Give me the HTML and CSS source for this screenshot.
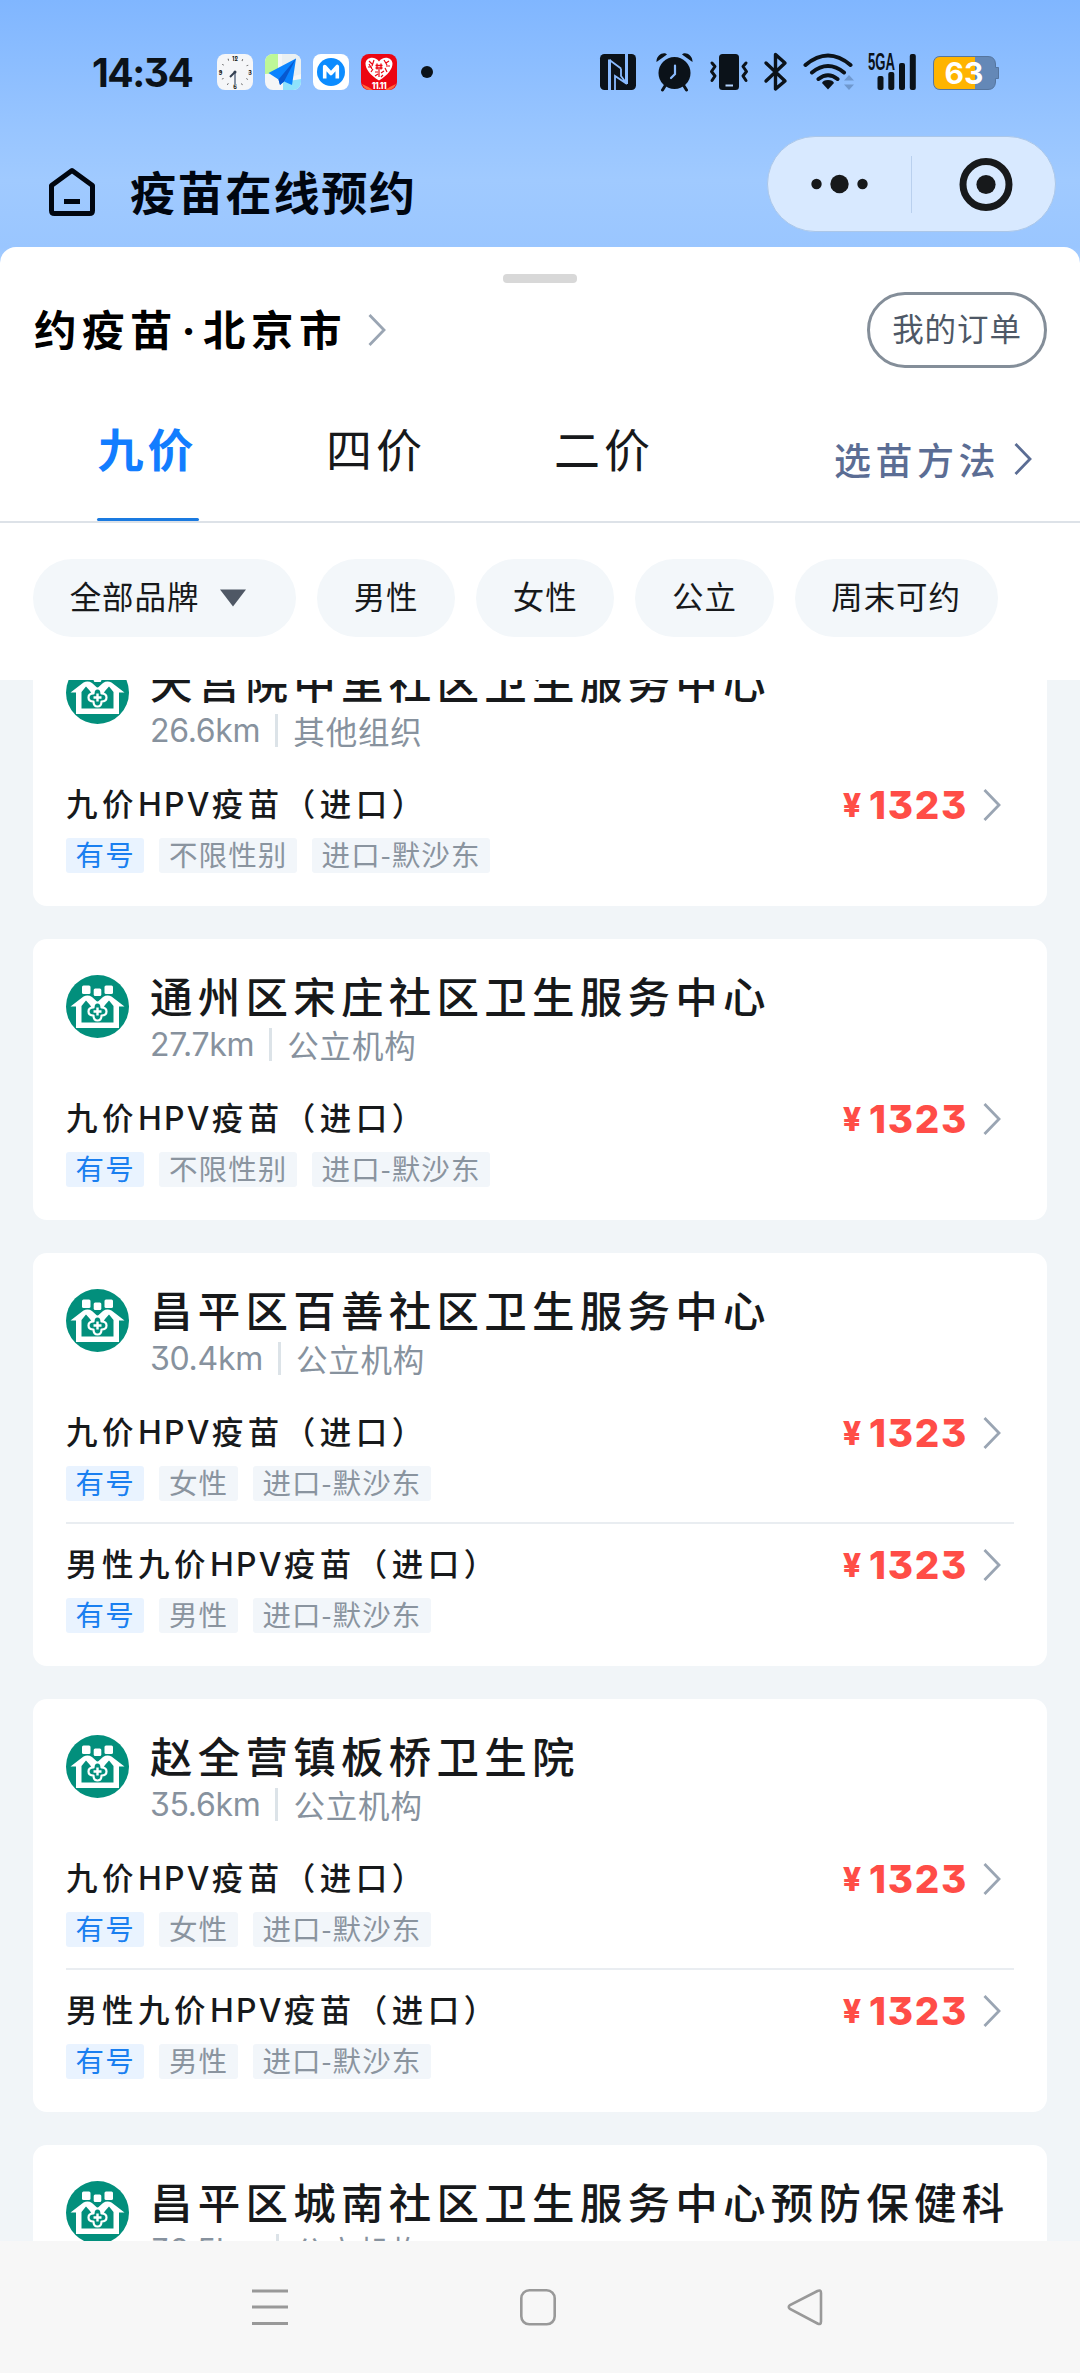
FILE: index.html
```html
<!DOCTYPE html>
<html lang="zh-CN">
<head>
<meta charset="utf-8">
<title>疫苗在线预约</title>
<link rel="stylesheet" href="styles.css">
</head>
<body>
<svg class="defs" width="0" height="0">
  <symbol id="chev" viewBox="0 0 18 32"><path d="M1.500 1 16 16 1.500 31" fill="none" stroke="currentColor" stroke-width="2.800"/></symbol>
  <symbol id="logo" viewBox="0 0 63 63">
    <circle cx="31.500" cy="31.500" r="31.500" fill="#028f7c"/>
    <g fill="#fff">
      <rect x="16" y="10.500" width="8.500" height="8.500" rx="1.500"/><rect x="27.700" y="13.500" width="7.600" height="7.500" rx="1.500"/><rect x="38.500" y="10.500" width="8.500" height="8.500" rx="1.500"/>
      <path d="M4.500 31.500 17.500 21.500Q22 19.500 26 22L31.500 27 37 22Q41 19.500 45.500 21.500L58.500 31.500H53V53H10V31.500Z"/>
    </g>
    <path d="M15.500 31 20 25.500 24 30 31.500 42 39 30 43 25.500 47.500 31V47.500H15.500Z" fill="#028f7c"/>
    <path d="M27.500 32.500Q27.500 27.500 31.500 27.500 35.500 27.500 35.500 32.500 40.500 32.500 40.500 36.500 40.500 40.500 35.500 40.500 35.500 45.500 31.500 45.500 27.500 45.500 27.500 40.500 22.500 40.500 22.500 36.500 22.500 32.500 27.500 32.500Z" fill="#028f7c" stroke="#fff" stroke-width="2.200" stroke-linejoin="round"/>
    <path d="M31.500 32.500v8M27.500 36.500h8" stroke="#fff" stroke-width="2.400"/>
  </symbol>
</svg>

<div class="screen">
  <div class="status">
    <span class="time">14:34</span>
    <div class="apps">
      <svg width="36" height="36" viewBox="0 0 36 36">
        <rect width="36" height="36" rx="8" fill="#f5f6f8"/>
        <circle cx="18" cy="18" r="14" fill="none" stroke="#444" stroke-width="2" stroke-dasharray=".7 6.630" stroke-dashoffset=".35"/>
        <g class="dial"><text x="18" y="6.500">12</text><text x="33" y="20.500">3</text><text x="18" y="34.500">6</text><text x="3.500" y="20.500">9</text></g>
        <path d="M18 18v13" stroke="#8792a3" stroke-width="2"/><path d="M18 18 13 23" stroke="#333f50" stroke-width="2"/><circle cx="18" cy="18" r="1.500" fill="#333f50"/>
      </svg>
      <svg width="36" height="36" viewBox="0 0 36 36">
        <defs><clipPath id="rc"><rect width="36" height="36" rx="8"/></clipPath></defs>
        <g clip-path="url(#rc)"><rect width="36" height="36" fill="#f4f6f7"/><path d="M0 0H13V19L0 20Z" fill="#bdf797"/><path d="M17 0h19v20L17 26Z" fill="#eaf0f2"/><path d="M18 28 36 25V36H18Z" fill="#8fe2fb"/></g>
        <path d="M31 4.500 3.500 19 13.500 25.500 15 31 19 27.500 27 31Z" fill="#0a84ff"/><path d="M31 4.500 13.500 25.500 15 31 19 27.500Z" fill="#0758cf"/>
      </svg>
      <svg width="36" height="36" viewBox="0 0 36 36">
        <rect width="36" height="36" rx="8" fill="#fff"/><circle cx="18" cy="18" r="14" fill="#0c8cff"/>
        <path d="M11.700 24.500V12.500L18 19.500 24.300 12.500V24.500" fill="none" stroke="#fff" stroke-width="3.600" stroke-linejoin="round"/>
      </svg>
      <svg width="36" height="36" viewBox="0 0 36 36">
        <rect width="36" height="36" rx="8" fill="#ec0612"/><path d="M1 30Q8 33 12 36H8Q3 35 1 30ZM35 30Q28 33 24 36H28Q33 35 35 30Z" fill="#ff6a3c"/>
        <path d="M18 26.500C9 21 4.500 15 4.500 9.500 5 3 14 1.500 18 7.500 22 1.500 31 3 31.500 9.500 31.500 15 27 21 18 26.500Z" fill="#fff"/>
        <path d="M8 7l3 3M13 6l-2 6M7 13h4M12 15l-2 3M14 18h3M18 15v8M20 19l3-2M24 14l2 4M25 12h4M23 6l3 5M28 7l-3 2M14 22l3-2M20 23l2-2M8 10l3 5" stroke="#ec0612" stroke-width="1.200"/>
        <path d="M14.500 11.500h7M14.500 14h7M16 9.500v6M20 9.500v6" stroke="#ec0612" stroke-width="1.300"/>
        <text class="sale" x="18" y="34.500">11.11</text>
      </svg>
    </div>
    <i class="dot"></i>
    <svg width="420" height="40" viewBox="599 52 420 40">
      <g fill="#0b1219">
        <rect x="600" y="54" width="36" height="36" rx="4.500"/>
        <circle cx="674.500" cy="73" r="16"/>
        <path d="M656.500 62C656 55 664 51 667 54.500ZM692.500 62C693 55 685 51 682 54.500Z"/>
        <rect x="719" y="54" width="20" height="36" rx="3.500"/>
        <path d="M828 80Q823 80 822 83L828 89.500 834 83Q833 80 828 80Z"/>
        <rect x="877.500" y="76" width="6" height="14" rx="2"/><rect x="888.300" y="72" width="6" height="18" rx="2"/><rect x="899" y="63" width="6" height="27" rx="2"/><rect x="909.800" y="54" width="6" height="36" rx="2"/>
      </g>
      <g fill="none" stroke="#0b1219" stroke-width="3" stroke-linecap="round" stroke-linejoin="round">
        <path d="M665 86 662.500 90M684 86 686.500 90"/>
        <path d="M712 63 715 66.500 711.500 71.500 715 76 712 80.500M746 63 743 66.500 746.500 71.500 743 76 746 80.500"/>
        <path d="M766 63 785 81 775.500 89V54.500L785 63 766 81" stroke-width="3.400"/>
        <path d="M805.500 65Q828 46 850.500 65M812 72.500Q828 59.500 844 72.500M818.500 79Q828 71.500 837.500 79" stroke-width="4"/>
      </g>
      <g fill="none" stroke="#8abbff">
        <path d="M609.500 90V59.500M626.500 54V84" stroke-width="3"/>
        <path d="M609.500 60 621 68.500M627 84 615 76V90M621 68.500V76L627 84" stroke-width="1.800"/>
        <path d="M675 65.500V74L671 78" stroke-linecap="round" stroke-width="2.200"/><path d="M725.500 85.500h7.500" stroke="#b5d4ff" stroke-width="2"/>
      </g>
      <path d="M844 80.500 849 75 854 80.500ZM844 84.500 849 90 854 84.500Z" fill="#6f98ce"/>
      <text class="net" x="868" y="70" textLength="27" lengthAdjust="spacingAndGlyphs">5GA</text>
      <path d="M940 56.500H988Q995 56.500 995.500 64V67.500H998.500V78.500H995.500V82Q995 89.500 988 89.500H940Q933.500 89.500 933.500 82V64Q933.500 56.500 940 56.500Z" fill="#6488b7" stroke="#55759f"/>
      <path d="M975 57H940Q934 57 934 64V82Q934 89 940 89H975Z" fill="#ffb400"/>
      <text class="pct" x="964" y="84">63</text>
    </svg>
  </div>

  <header class="head">
    <svg class="home" width="50" height="50" viewBox="0 0 50 50"><path d="M25 3.500 45.500 18.500V43.500Q45.500 46.500 42.500 46.500H7.500Q4.500 46.500 4.500 43.500V18.500Z" fill="none" stroke="#000610" stroke-width="5" stroke-linejoin="round"/><path d="M17 34.500H33" stroke="#000610" stroke-width="5"/></svg>
    <h1>疫苗在线预约</h1>
    <div class="capsule">
      <svg width="288" height="96" viewBox="0 0 288 96"><g fill="#17191b"><circle cx="48.500" cy="47" r="5.200"/><circle cx="71.500" cy="47" r="9.200"/><circle cx="94.500" cy="47" r="5.200"/><circle cx="218" cy="47.500" r="9.600"/></g><circle cx="218" cy="47.500" r="23" fill="none" stroke="#17191b" stroke-width="7"/><path d="M143.500 19v57" stroke="#b9d0ee"/></svg>
    </div>
  </header>

  <main class="sheet">
    <i class="handle"></i>
    <div class="place">
      <h2>约疫苗<span>·</span>北京市</h2>
      <svg class="chev" width="18" height="32"><use href="#chev"/></svg>
      <a class="orders">我的订单</a>
    </div>
    <nav class="tabs">
      <a class="tab on">九价</a><a class="tab">四价</a><a class="tab">二价</a>
      <a class="how">选苗方法<svg width="18" height="32"><use href="#chev"/></svg></a>
    </nav>
    <div class="chips">
      <a class="chip">全部品牌<svg width="28" height="18" viewBox="0 0 28 18"><path d="M1 .5H27L14 17.500Z" fill="#4f5865"/></svg></a><a class="chip">男性</a><a class="chip">女性</a><a class="chip">公立</a><a class="chip">周末可约</a>
    </div>

    <div class="list">
      <section class="card">
        <div class="org"><svg width="63" height="63"><use href="#logo"/></svg><div><h3>天宫院中里社区卫生服务中心</h3><p><b>26.6km</b><i></i>其他组织</p></div></div>
        <div class="item"><div><h4>九价<b>HPV</b>疫苗（进口）</h4><div class="tags"><em>有号</em><span>不限性别</span><span>进口-默沙东</span></div></div><div class="price"><small>¥</small>1323<svg width="18" height="32"><use href="#chev"/></svg></div></div>
      </section>
      <section class="card">
        <div class="org"><svg width="63" height="63"><use href="#logo"/></svg><div><h3>通州区宋庄社区卫生服务中心</h3><p><b>27.7km</b><i></i>公立机构</p></div></div>
        <div class="item"><div><h4>九价<b>HPV</b>疫苗（进口）</h4><div class="tags"><em>有号</em><span>不限性别</span><span>进口-默沙东</span></div></div><div class="price"><small>¥</small>1323<svg width="18" height="32"><use href="#chev"/></svg></div></div>
      </section>
      <section class="card">
        <div class="org"><svg width="63" height="63"><use href="#logo"/></svg><div><h3>昌平区百善社区卫生服务中心</h3><p><b>30.4km</b><i></i>公立机构</p></div></div>
        <div class="item"><div><h4>九价<b>HPV</b>疫苗（进口）</h4><div class="tags"><em>有号</em><span>女性</span><span>进口-默沙东</span></div></div><div class="price"><small>¥</small>1323<svg width="18" height="32"><use href="#chev"/></svg></div></div>
        <div class="item"><div><h4>男性九价<b>HPV</b>疫苗（进口）</h4><div class="tags"><em>有号</em><span>男性</span><span>进口-默沙东</span></div></div><div class="price"><small>¥</small>1323<svg width="18" height="32"><use href="#chev"/></svg></div></div>
      </section>
      <section class="card">
        <div class="org"><svg width="63" height="63"><use href="#logo"/></svg><div><h3>赵全营镇板桥卫生院</h3><p><b>35.6km</b><i></i>公立机构</p></div></div>
        <div class="item"><div><h4>九价<b>HPV</b>疫苗（进口）</h4><div class="tags"><em>有号</em><span>女性</span><span>进口-默沙东</span></div></div><div class="price"><small>¥</small>1323<svg width="18" height="32"><use href="#chev"/></svg></div></div>
        <div class="item"><div><h4>男性九价<b>HPV</b>疫苗（进口）</h4><div class="tags"><em>有号</em><span>男性</span><span>进口-默沙东</span></div></div><div class="price"><small>¥</small>1323<svg width="18" height="32"><use href="#chev"/></svg></div></div>
      </section>
      <section class="card">
        <div class="org"><svg width="63" height="63"><use href="#logo"/></svg><div><h3>昌平区城南社区卫生服务中心预防保健科</h3><p><b>38.5km</b><i></i>公立机构</p></div></div>
      </section>
    </div>
  </main>

  <footer class="navbar">
    <svg width="40" height="40" viewBox="0 0 40 40"><path d="M2 4H38M2 20H38M2 36.500H38" stroke="#999" stroke-width="3"/></svg>
    <svg width="40" height="40" viewBox="0 0 40 40"><rect x="3.300" y="3.300" width="33.400" height="34" rx="8" fill="none" stroke="#999" stroke-width="2.600"/></svg>
    <svg width="40" height="40" viewBox="0 0 40 40"><path d="M31.500 4 4 18Q1.500 20 4 22L31.500 36.500Q35 38 35 34.500V6Q35 2.500 31.500 4Z" fill="none" stroke="#999" stroke-width="2.600"/></svg>
  </footer>
</div>
</body>
</html>
```
FILE: styles.css
```css
* { box-sizing: border-box; margin: 0; padding: 0; }
body { font-family: "Noto Sans CJK SC", sans-serif; color: #17191b; }
i, em { font-style: normal; }
svg { display: block; flex: none; }
.defs { position: absolute; }
.screen { width: 1080px; height: 2373px; display: flex; flex-direction: column; overflow: hidden; background: linear-gradient(#80b6ff 0, #98c5ff 130px, #a0caff 180px, #9ac6ff 247px, #a8ceff 265px); }

.status { height: 132px; flex: none; display: flex; align-items: center; padding: 12px 0 0 92px; color: #0b1219; }
.time { width: 125px; font: 700 39px/1 Inter, sans-serif; font-feature-settings: "cv09"; letter-spacing: -1.5px; }
.apps { display: flex; gap: 12px; }
.dial { font: 700 5.5px Inter, sans-serif; text-anchor: middle; fill: #111; }
.sale { font: 800 8.5px Inter, sans-serif; text-anchor: middle; fill: #fff; letter-spacing: -.5px; }
.dot { width: 12px; height: 12px; margin: 0 166px 0 24px; border-radius: 50%; background: #0b1219; }
.net { font: 700 24px "Liberation Sans", sans-serif; fill: #0b1219; }
.pct { font: 700 30px Inter, sans-serif; text-anchor: middle; fill: #fff; }

.head { height: 115px; flex: none; display: flex; align-items: flex-start; padding: 4px 24px 0 47px; }
.home { margin-top: 31px; }
h1 { margin: 19px auto 0 33px; font-size: 46px; line-height: 70px; font-weight: 700; letter-spacing: 1.8px; color: #000610; }
.capsule { width: 289px; height: 96px; border-radius: 48px; background: #d8e9ff; border: 1px solid #abc7e9; overflow: hidden; }

.sheet { flex: 1; min-height: 0; display: flex; flex-direction: column; background: #fff; border-radius: 16px 16px 0 0; overflow: hidden; }
.handle { align-self: center; flex: none; width: 74px; height: 9px; margin-top: 27px; border-radius: 4px; background: #d8d8d8; }
.place { height: 93px; flex: none; display: flex; align-items: center; padding: 0 33px; color: #9aa5b3; }
h2 { padding-left: 1px; font-size: 42.500px; line-height: 60px; font-weight: 700; letter-spacing: 5.5px; color: #000; }
h2 span { display: inline-block; width: 25px; text-align: center; font-family: Inter, sans-serif; letter-spacing: 0; text-indent: -4px; }
.chev { margin-left: 21px; }
.orders { margin-left: auto; width: 180px; height: 76px; border: 3px solid #848e99; border-radius: 38px; font-size: 31.500px; line-height: 65px; letter-spacing: .9px; text-align: center; color: #4e5866; }

.tabs { height: 147px; flex: none; display: flex; padding-left: 33px; border-bottom: 2px solid #dde2e8; }
.tab { width: 228px; display: flex; flex-direction: column; align-items: center; padding-top: 36px; font-size: 46px; line-height: 70px; letter-spacing: 4px; }
.on { width: 229px; font-weight: 700; color: #127dff; }
.on::after { content: ""; width: 102px; height: 3px; margin-top: 36px; border-radius: 2px; background: #1a7ae0; }
.how { flex: 1; display: flex; align-items: center; justify-content: flex-end; padding: 21px 48px 0 0; font-size: 37px; font-weight: 500; letter-spacing: 4.5px; color: #5b6d94; }
.how svg { margin-left: 14px; }

.chips { height: 157px; flex: none; display: flex; align-items: flex-start; gap: 21px; padding: 36px 33px 0; }
.chip { height: 78px; display: flex; align-items: center; padding: 0 36.700px 6px; border-radius: 39px; background: #f3f7fa; font-size: 31.500px; letter-spacing: .9px; line-height: 72px; }
.chip svg { margin: 6px 12px 0 20px; }

.list { flex: 1; min-height: 0; overflow: hidden; background: #f1f5f8; padding: 0 33px; }
.card { margin-bottom: 33px; padding: 36px 33px 10px; border-radius: 14px; background: #fff; }
.card:first-child { margin-top: -55px; }
.org { display: flex; height: 103px; gap: 21px; }
h3 { font-size: 42.500px; line-height: 60px; margin-top: -10px; font-weight: 500; letter-spacing: 5.25px; white-space: nowrap; }
.org p { display: flex; align-items: center; height: 34px; line-height: 34px; margin-top: 2px; font-size: 31.500px; letter-spacing: .8px; color: #87929e; }
.org p b { font: 400 32px Inter, sans-serif; font-feature-settings: "cv09"; letter-spacing: -.3px; }
.org p i { width: 3px; height: 33px; margin: 0 15px 0 15px; background: #dce3e8; }

.item { height: 132px; display: flex; justify-content: space-between; padding-top: 15px; }
.item:not(:last-child) { border-bottom: 2px solid #e9edf1; }
h4 { font-size: 31.500px; line-height: 46px; font-weight: 500; letter-spacing: 4.5px; white-space: nowrap; }
h4 b { font: 500 32px/1 Inter, sans-serif; letter-spacing: 2.2px; }
.tags { display: flex; gap: 15px; margin-top: 13px; }
.tags > * { height: 35px; padding: 0 9.600px; border-radius: 3px; font-size: 28.500px; line-height: 31px; letter-spacing: 1.1px; background: #f2f6fa; color: #8a949f; }
.tags em { background: #e9f3ff; color: #1a7ff0; }
.price { height: 52px; display: flex; align-items: center; padding-right: 13px; font: 800 38.5px/1 Inter, sans-serif; font-feature-settings: "cv09"; letter-spacing: 1.7px; color: #ff4d47; }
.price small { font-size: 32px; margin: 2px 6px 0 0; }
.price svg { margin-left: 15px; color: #9aa5b3; }

.navbar { height: 132px; flex: none; display: flex; align-items: flex-start; padding: 46px 0 0 250px; gap: 228px; background: #f7f7f7; }
```
